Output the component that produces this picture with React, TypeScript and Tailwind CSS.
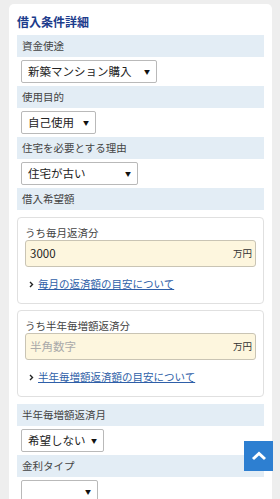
import React from "react";

const font = { fontFamily: '"Noto Sans CJK JP", "Noto Sans", sans-serif' };

function Label({ children }: { children: React.ReactNode }) {
  return (
    <div className="h-[22px] bg-[#e3edf5] pl-[5px] flex items-center text-[10.5px] text-[#444] leading-none">
      {children}
    </div>
  );
}

function Select({ value, w }: { value: string; w: string }) {
  return (
    <div
      className={`ml-[4px] mt-[3px] mb-[3px] h-[23px] ${w} border border-[#b9b9b9] rounded-[2px] bg-white flex items-center justify-between pl-[6px] pr-[6px] text-[11.5px] text-[#222] leading-none`}
    >
      <span>{value}</span>
      <span className="text-[6px] text-[#111]">▼</span>
    </div>
  );
}

function Amount({
  label,
  value,
  placeholder,
  link,
}: {
  label: string;
  value?: string;
  placeholder?: string;
  link: string;
}) {
  return (
    <div className="border border-[#e0e0e0] rounded-[4px] px-[7px] pt-[7px] pb-[12px] bg-white">
      <div className="text-[10.5px] text-[#444] leading-[15px]">{label}</div>
      <div className="h-[27px] border border-[#c9c4b4] rounded-[3px] bg-[#fdf6de] flex items-center justify-between pl-[4px] pr-[3px]">
        {value ? (
          <span className="text-[11.5px] text-[#222]">{value}</span>
        ) : (
          <span className="text-[11.5px] text-[#aaa]">{placeholder}</span>
        )}
        <span className="text-[9.5px] text-[#333]">万円</span>
      </div>
      <div className="mt-[10px] pl-[4px] flex items-center gap-[4px] leading-[14px]">
        <svg width="5" height="7" viewBox="0 0 5 7">
          <path d="M1 1 L3.5 3.5 L1 6" fill="none" stroke="#222" strokeWidth="1.4" />
        </svg>
        <span className="text-[10.5px] text-[#2f5fa8] underline">{link}</span>
      </div>
    </div>
  );
}

export default function App() {
  return (
    <div style={font} className="relative h-[499px] overflow-hidden bg-[#eeeeee] pt-[4px] pl-[9px] pr-[8px]">
      <div className="bg-white rounded-[5px] px-[8px] pt-[10px] pb-[40px]">
        <div className="text-[12px] font-bold text-[#1c3c8c] leading-[15px] mb-[6px]">借入条件詳細</div>
        <Label>資金使途</Label>
        <Select value="新築マンション購入" w="w-[136px]" />
        <Label>使用目的</Label>
        <Select value="自己使用" w="w-[75px]" />
        <Label>住宅を必要とする理由</Label>
        <Select value="住宅が古い" w="w-[117px]" />
        <Label>借入希望額</Label>
        <div className="mt-[7px] flex flex-col gap-[6px]">
          <Amount label="うち毎月返済分" value="3000" link="毎月の返済額の目安について" />
          <Amount label="うち半年毎増額返済分" placeholder="半角数字" link="半年毎増額返済額の目安について" />
        </div>
        <div className="mt-[7px]">
          <Label>半年毎増額返済月</Label>
          <Select value="希望しない" w="w-[83px]" />
          <Label>金利タイプ</Label>
          <Select value="" w="w-[77px]" />
        </div>
      </div>
      <div className="absolute left-[244px] top-[441px] w-[29px] h-[30px] bg-[#2d7fd1] flex items-center justify-center">
        <svg width="16" height="10" viewBox="0 0 16 10">
          <path d="M2 8 L8 2.5 L14 8" fill="none" stroke="#fff" strokeWidth="3" />
        </svg>
      </div>
    </div>
  );
}
